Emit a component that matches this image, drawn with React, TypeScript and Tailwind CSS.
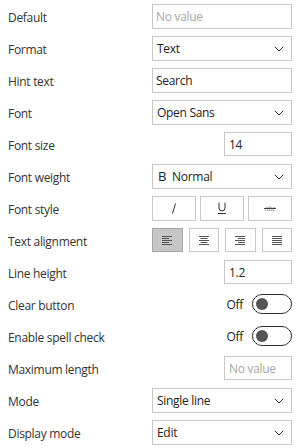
import React from "react";

const font = { fontFamily: '"Open Sans", "Noto Sans", sans-serif', letterSpacing: "-0.3px" };

function Chevron() {
  return (
    <svg width="10" height="6" viewBox="0 0 10 6" className="shrink-0 mt-[1px]">
      <path d="M0.8 0.8 L5 5 L9.2 0.8" fill="none" stroke="#333" strokeWidth="1" />
    </svg>
  );
}

function Select({ children }: { children: React.ReactNode }) {
  return (
    <div className="w-[140px] h-[25px] border border-[#c8c8c8] bg-white flex items-center justify-between pl-[4px] pr-[7px] text-[12px] text-[#222]">
      <div className="flex items-center pt-[2px]">{children}</div>
      <Chevron />
    </div>
  );
}

function Input({ value, placeholder }: { value?: string; placeholder?: string }) {
  return (
    <div className="w-[140px] h-[25px] border border-[#c8c8c8] bg-white flex items-center pl-[3px] text-[12px]">
      {value ? (
        <span className="text-[#222] pt-[2px]">{value}</span>
      ) : (
        <span className="text-[#a6a6a6] pt-[2px]">{placeholder}</span>
      )}
    </div>
  );
}

function Small({ value, placeholder }: { value?: string; placeholder?: string }) {
  return (
    <div className="w-[140px] flex justify-end">
      <div className="w-[68px] h-[24px] border border-[#c8c8c8] bg-white flex items-center pl-[4px] text-[12px]">
        {value ? (
          <span className="text-[#222] pt-[2px]">{value}</span>
        ) : (
          <span className="text-[#a6a6a6] pt-[2px]">{placeholder}</span>
        )}
      </div>
    </div>
  );
}

function Toggle() {
  return (
    <div className="w-[140px] flex justify-end items-center gap-[9px]">
      <span className="text-[12px] text-[#222] pt-[2px]">Off</span>
      <div className="w-[40px] h-[20px] rounded-full border border-[#333] flex items-center pl-[3px]">
        <div className="w-[12px] h-[12px] rounded-full bg-[#555]" />
      </div>
    </div>
  );
}

function AlignIcon({ kind }: { kind: "left" | "center" | "right" | "justify" }) {
  const widths = kind === "justify" ? [10, 10, 10, 10, 10] : [10, 7, 10, 7, 10];
  return (
    <svg width="10" height="9" viewBox="0 0 10 9">
      {widths.map((w, i) => {
        let x = 0;
        if (kind === "center") x = (10 - w) / 2;
        if (kind === "right") x = 10 - w;
        return <rect key={i} x={x} y={i * 2} width={w} height="1" fill="#555" />;
      })}
    </svg>
  );
}

function Row({ label, children }: { label: string; children: React.ReactNode }) {
  return (
    <div className="h-8 flex items-center justify-between pl-2 pr-[10px]">
      <span className="text-[12px] text-[#333] pt-[3px]">{label}</span>
      {children}
    </div>
  );
}

export default function App() {
  return (
    <div className="w-[302px] h-[448px] bg-white overflow-hidden" style={font}>
      <Row label="Default">
        <Input placeholder="No value" />
      </Row>
      <Row label="Format">
        <Select>Text</Select>
      </Row>
      <Row label="Hint text">
        <Input value="Search" />
      </Row>
      <Row label="Font">
        <Select>Open Sans</Select>
      </Row>
      <Row label="Font size">
        <Small value="14" />
      </Row>
      <Row label="Font weight">
        <Select>
          <span className="ml-[1px] text-[13px] text-[#222] mr-[6px]">B</span>
          <span>Normal</span>
        </Select>
      </Row>
      <Row label="Font style">
        <div className="w-[140px] grid grid-cols-3 gap-[4px]">
          <div className="h-[25px] border border-[#c8c8c8] bg-white flex items-center justify-center">
            <svg width="6" height="11" viewBox="0 0 6 11">
              <path d="M4.5 0.5 L1.5 10.5" stroke="#333" strokeWidth="1" fill="none" />
            </svg>
          </div>
          <div className="h-[25px] border border-[#c8c8c8] bg-white flex items-center justify-center">
            <svg width="8" height="12" viewBox="0 0 8 12">
              <path d="M1 0.5 V6 Q1 9 4 9 Q7 9 7 6 V0.5" stroke="#333" strokeWidth="1" fill="none" />
              <path d="M0 11.5 H8" stroke="#333" strokeWidth="1" />
            </svg>
          </div>
          <div className="h-[25px] border border-[#c8c8c8] bg-white flex items-center justify-center">
            <svg width="12" height="8" viewBox="0 0 12 8">
              <text x="6" y="6.5" textAnchor="middle" fontSize="7" fill="#888" fontFamily="Open Sans, sans-serif">abc</text>
              <path d="M0 4.5 H12" stroke="#444" strokeWidth="1" />
            </svg>
          </div>
        </div>
      </Row>
      <Row label="Text alignment">
        <div className="w-[140px] grid grid-cols-4 gap-[6px]">
          <div className="h-[24px] border border-[#a6a6a6] bg-[#c6c6c6] flex items-center justify-center">
            <AlignIcon kind="left" />
          </div>
          <div className="h-[24px] border border-[#c8c8c8] bg-white flex items-center justify-center">
            <AlignIcon kind="center" />
          </div>
          <div className="h-[24px] border border-[#c8c8c8] bg-white flex items-center justify-center">
            <AlignIcon kind="right" />
          </div>
          <div className="h-[24px] border border-[#c8c8c8] bg-white flex items-center justify-center">
            <AlignIcon kind="justify" />
          </div>
        </div>
      </Row>
      <Row label="Line height">
        <Small value="1.2" />
      </Row>
      <Row label="Clear button">
        <Toggle />
      </Row>
      <Row label="Enable spell check">
        <Toggle />
      </Row>
      <Row label="Maximum length">
        <Small placeholder="No value" />
      </Row>
      <Row label="Mode">
        <Select>Single line</Select>
      </Row>
      <Row label="Display mode">
        <Select>Edit</Select>
      </Row>
    </div>
  );
}
